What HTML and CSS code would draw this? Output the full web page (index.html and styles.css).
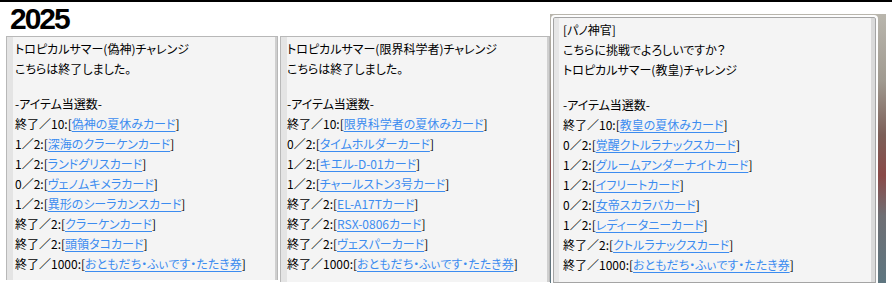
FILE: index.html
```html
<!DOCTYPE html>
<html lang="ja">
  <head>
    <meta charset="UTF-8" />
    <meta name="viewport" content="width=device-width, initial-scale=1.0" />
    <title>2025</title>
    <link rel="stylesheet" href="styles.css">
  </head>
  <body>
    <main class="board">
      <h1 class="year">2025</h1>

      <section class="shot shot-one">
        <p>トロピカルサマー(偽神)チャレンジ</p>
        <p>こちらは終了しました。</p>
        <p class="blank"></p>
        <p>-アイテム当選数-</p>
        <p>終了／10:[<a href="#">偽神の夏休みカード</a>]</p>
        <p>1／2:[<a href="#">深海のクラーケンカード</a>]</p>
        <p>1／2:[<a href="#">ランドグリスカード</a>]</p>
        <p>0／2:[<a href="#">ヴェノムキメラカード</a>]</p>
        <p>1／2:[<a href="#">異形のシーラカンスカード</a>]</p>
        <p>終了／2:[<a href="#">クラーケンカード</a>]</p>
        <p>終了／2:[<a href="#">頭領タコカード</a>]</p>
        <p>終了／1000:[<a href="#">おともだち・ふぃです・たたき券</a>]</p>
      </section>

      <section class="shot shot-two">
        <p>トロピカルサマー(限界科学者)チャレンジ</p>
        <p>こちらは終了しました。</p>
        <p class="blank"></p>
        <p>-アイテム当選数-</p>
        <p>終了／10:[<a href="#">限界科学者の夏休みカード</a>]</p>
        <p>0／2:[<a href="#">タイムホルダーカード</a>]</p>
        <p>1／2:[<a href="#">キエル-D-01カード</a>]</p>
        <p>1／2:[<a href="#">チャールストン3号カード</a>]</p>
        <p>終了／2:[<a href="#">EL-A17Tカード</a>]</p>
        <p>終了／2:[<a href="#">RSX-0806カード</a>]</p>
        <p>終了／2:[<a href="#">ヴェスパーカード</a>]</p>
        <p>終了／1000:[<a href="#">おともだち・ふぃです・たたき券</a>]</p>
      </section>

      <section class="scene">
        <div class="dialog">
          <p>[パノ神官]</p>
          <p>こちらに挑戦でよろしいですか？</p>
          <p>トロピカルサマー(教皇)チャレンジ</p>
          <p class="blank"></p>
          <p>-アイテム当選数-</p>
          <p>終了／10:[<a href="#">教皇の夏休みカード</a>]</p>
          <p>0／2:[<a href="#">覚醒クトルラナックスカード</a>]</p>
          <p>1／2:[<a href="#">グルームアンダーナイトカード</a>]</p>
          <p>1／2:[<a href="#">イフリートカード</a>]</p>
          <p>0／2:[<a href="#">女帝スカラバカード</a>]</p>
          <p>1／2:[<a href="#">レディータニーカード</a>]</p>
          <p>終了／2:[<a href="#">クトルラナックスカード</a>]</p>
          <p>終了／1000:[<a href="#">おともだち・ふぃです・たたき券</a>]</p>
        </div>
      </section>
    </main>
  </body>
</html>
```

FILE: styles.css
```css
body {
  margin: 0;
  padding: 0;
  background-color: #fff;
  border-top: 2px solid #000;
  color: #000;
  font-family: "Noto Sans CJK JP", "Noto Sans", sans-serif;
}

.board {
  display: grid;
  grid-template-columns: 274px 270px 336px;
  grid-template-rows: 34px auto;
  padding-left: 6px;
}

.year {
  grid-column: 1 / 3;
  grid-row: 1;
  margin: 0;
  padding-left: 4px;
  font-family: "Liberation Sans", Arial, sans-serif;
  font-size: 30px;
  line-height: 34px;
  font-weight: bold;
  letter-spacing: -2px;
}

.shot,
.dialog {
  background-color: #f4f4f4;
  font-size: 12px;
  font-feature-settings: "palt";
  overflow: hidden;
}

.shot {
  grid-row: 2;
  border: 1px solid #b8b8b8;
  border-bottom: none;
  box-shadow: inset 6px 0 0 #e4e4e4, inset -2px 0 0 #cfcfcf;
  padding: 2px 6px 0 8px;
}

.shot-one {
  grid-column: 1;
  width: 272px;
  height: 244px;
  box-sizing: border-box;
}

.shot-two {
  grid-column: 2;
  width: 270px;
  height: 246px;
  box-sizing: border-box;
  padding-left: 6px;
}

.scene {
  grid-column: 3;
  grid-row: 1 / 3;
  margin-top: 12px;
  height: 269px;
  box-sizing: border-box;
  padding: 1px 8px 0 1px;
  background: linear-gradient(
    180deg,
    #b9b6ad 0%,
    #a09a90 25%,
    #7c5f58 45%,
    #8a4a48 60%,
    #6f6f74 75%,
    #5e7680 100%
  );
  overflow: hidden;
}

.dialog {
  height: 100%;
  box-sizing: border-box;
  border: 2px solid #fdfdfd;
  border-bottom: none;
  border-radius: 4px 4px 0 0;
  box-shadow: inset 0 0 0 1px #a4a4a4, inset 6px 0 0 #e6e6e6, inset -5px 0 0 #dadada;
  padding: 3px 8px 0 10px;
}

p {
  margin: 0;
  height: 20px;
  line-height: 20px;
  white-space: nowrap;
}

p.blank {
  height: 15px;
}

a {
  color: #3c8cf0;
  text-decoration: underline;
  text-underline-offset: 2px;
}
```
